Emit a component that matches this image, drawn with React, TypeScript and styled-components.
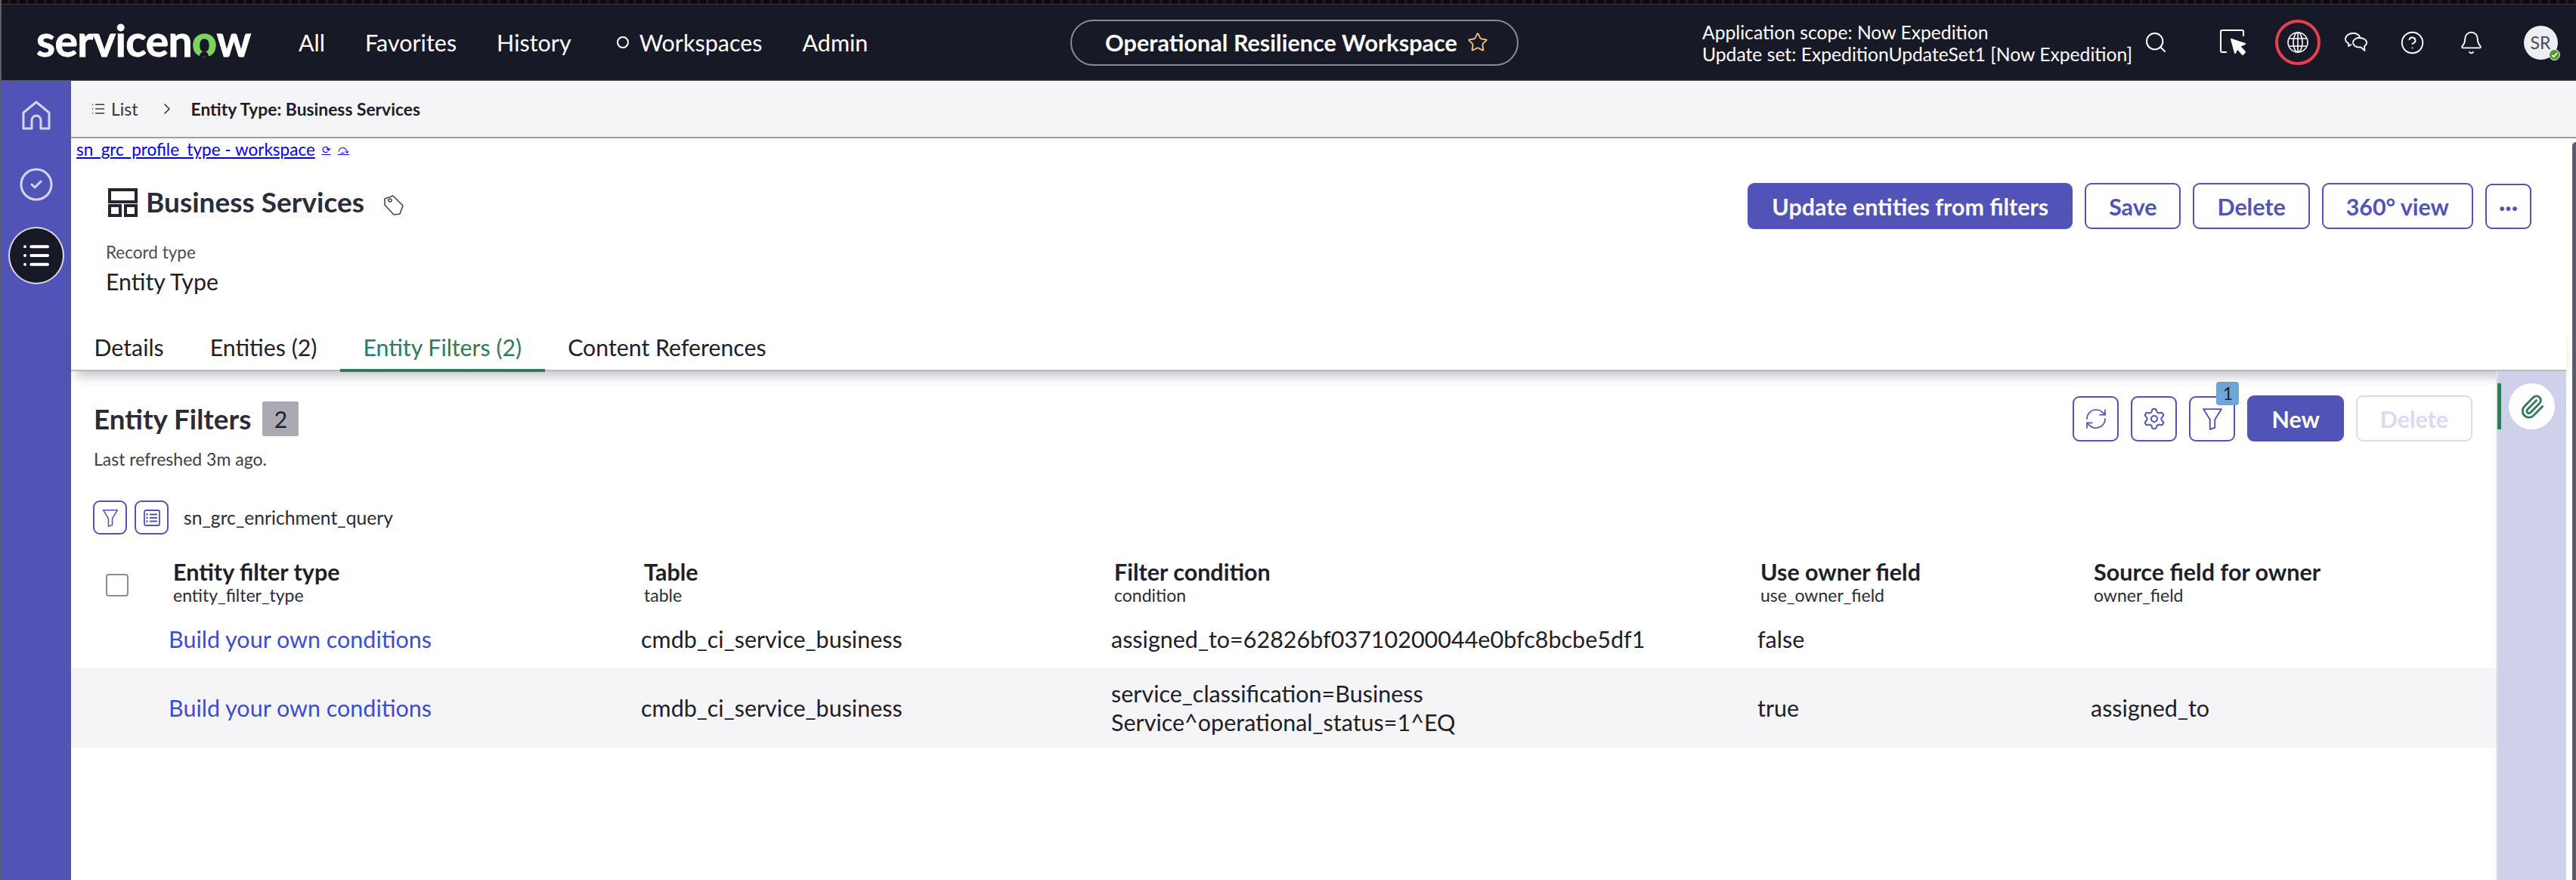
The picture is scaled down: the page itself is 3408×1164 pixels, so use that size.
import React from "react";
import styled, { createGlobalStyle } from "styled-components";
import { Bell, ChevronRight, CircleCheck, CircleHelp, List, Paperclip, RefreshCw, Search, Settings, Star } from "lucide-react";

const PRIMARY = "#5253b7";
const NAVY = "#181926";
const INK = "#1e2029";

const GlobalStyle = createGlobalStyle`
  html, body {
    margin: 0;
    padding: 0;
    background: #fff;
  }
  body {
    font-family: Lato, "Open Sans", sans-serif;
    color: ${INK};
  }
`;

const Page = styled.div`
  width: 3408px;
  height: 1164px;
  display: flex;
  flex-direction: column;
  overflow: hidden;
  box-sizing: border-box;
  border-left: 2px solid #5c5c6e;
`;

const TopStrip = styled.div`
  height: 5px;
  background: repeating-linear-gradient(90deg, #0b0b0d 0 8px, #1a1a1c 8px 12px);
  border-bottom: 1px solid #3a3a3e;
`;

const Header = styled.header`
  height: 100px;
  flex: none;
  display: flex;
  align-items: center;
  background: ${NAVY};
  border-bottom: 1px solid #55565f;
  padding-left: 46px;
  color: #fff;
`;

const Logo = styled.div`
  width: 282px;
  flex: none;
  font-size: 57px;
  font-weight: 700;
  letter-spacing: -0.6px;
  line-height: 60px;
  margin-top: -6px;
  white-space: nowrap;
  color: #fff;
  -webkit-text-stroke: 0.8px currentColor;
`;

const LogoO = styled.span`
  position: relative;
  color: #7ed35f;
  font-weight: 900;

  &::after {
    content: "";
    position: absolute;
    left: 50%;
    bottom: 12px;
    width: 12px;
    height: 7px;
    margin-left: -6px;
    background: ${NAVY};
    border-radius: 6px 6px 0 0;
  }
`;

const Nav = styled.nav`
  display: flex;
  align-items: center;
  gap: 53px;
  width: 1021px;
  flex: none;
  margin-left: 65px;
  font-size: 30.5px;
`;

const NavItem = styled.span<{ $ring?: boolean }>`
  display: flex;
  align-items: center;
  gap: 14px;
  margin-left: ${(p) => (p.$ring ? "7px" : "0")};
`;

const Ring = styled.i`
  width: 16px;
  height: 16px;
  box-sizing: border-box;
  border: 2px solid #fff;
  border-radius: 50%;
`;

const Pill = styled.div`
  width: 593px;
  height: 61px;
  flex: none;
  box-sizing: border-box;
  display: flex;
  align-items: center;
  justify-content: center;
  gap: 13px;
  padding-left: 6px;
  border: 2px solid #8a8b94;
  border-radius: 31px;
  font-size: 30.6px;
  font-weight: 700;
`;

const HeaderRight = styled.div`
  display: flex;
  align-items: center;
  margin-left: auto;
  padding-right: 17px;
`;

const Scope = styled.div`
  width: 572px;
  font-size: 24.7px;
  line-height: 29px;
  white-space: nowrap;
  margin-top: 2px;
`;

const HeaderIcon = styled.div<{ $ml: number; $alert?: boolean }>`
  width: 60px;
  height: 60px;
  box-sizing: border-box;
  flex: none;
  display: flex;
  align-items: center;
  justify-content: center;
  margin-left: ${(p) => p.$ml}px;
  border-radius: 50%;
  border: ${(p) => (p.$alert ? "4px solid #e5414d" : "none")};
`;

const Avatar = styled.div`
  position: relative;
  width: 45px;
  height: 45px;
  border-radius: 50%;
  background: #eceef2;
  color: #474b60;
  font-size: 23px;
  display: flex;
  align-items: center;
  justify-content: center;
`;

const AvatarBadge = styled.span`
  position: absolute;
  right: -3px;
  bottom: -1px;
  width: 15px;
  height: 15px;
  box-sizing: border-box;
  border-radius: 50%;
  border: 1.5px solid #fff;
  background: #4f9a2e;
  display: flex;
  align-items: center;
  justify-content: center;
`;

const Body = styled.div`
  flex: 1;
  min-height: 0;
  display: flex;
`;

const Sidebar = styled.aside`
  width: 92px;
  flex: none;
  display: flex;
  flex-direction: column;
  align-items: center;
  padding-top: 26px;
  background: ${PRIMARY};
  color: #d4d5e6;
`;

const SideCheck = styled.div`
  margin-top: 47px;
  display: flex;
`;

const SideActive = styled.div`
  width: 74px;
  height: 76px;
  box-sizing: border-box;
  margin-top: 32px;
  border-radius: 50%;
  border: 2px solid #d8d9e8;
  background: ${NAVY};
  color: #fff;
  display: flex;
  align-items: center;
  justify-content: center;
`;

const Main = styled.main`
  flex: 1;
  min-width: 0;
  display: flex;
  flex-direction: column;
`;

const Crumbs = styled.div`
  height: 74px;
  flex: none;
  display: flex;
  align-items: center;
  padding-left: 26px;
  background: #f5f5f7;
  border-bottom: 2px solid #9a9ca8;
  font-size: 23px;
  color: #343644;
`;

const CrumbLink = styled.span`
  display: flex;
  align-items: center;
  gap: 7px;
`;

const CrumbArrow = styled.span`
  display: flex;
  margin: 0 20px 0 26px;
`;

const CrumbCurrent = styled.span`
  font-weight: 700;
  font-size: 22.8px;
  color: ${INK};
`;

const Workspace = styled.div`
  flex: 1;
  min-height: 0;
  display: flex;
`;

const Panel = styled.div`
  flex: 1;
  min-width: 0;
  display: flex;
  flex-direction: column;
  padding-right: 8px;
`;

const Rim = styled.div`
  width: 5px;
  flex: none;
  margin-top: 5px;
  background: #5c5c6e;
  border-radius: 6px 0 0 0;
`;

const DevLink = styled.div`
  display: flex;
  gap: 9px;
  height: 30px;
  line-height: 30px;
  padding-left: 7px;
  font-size: 22.5px;
  color: #0000ee;
  text-decoration: underline;
`;

const DevGlyph = styled.span`
  font-size: 14px;
`;

const RecordHead = styled.div`
  display: flex;
  justify-content: space-between;
  align-items: flex-start;
  padding: 29px 46px 0 46px;
`;

const TitleRow = styled.div`
  display: flex;
  align-items: center;
  gap: 11px;
  height: 52px;
  padding-left: 3px;
`;

const RecordTitle = styled.h1`
  margin: -4px 0 0;
  font-size: 37px;
  font-weight: 700;
  color: #2a2c3a;
`;

const TagSlot = styled.span`
  display: flex;
  margin: 6px 0 0 14px;
`;

const FieldLabel = styled.div`
  margin-top: 25px;
  font-size: 22.5px;
  line-height: 30px;
  color: #4a4c58;
`;

const FieldValue = styled.div`
  margin-top: 5px;
  font-size: 30.3px;
  line-height: 36px;
`;

const ButtonRow = styled.div`
  display: flex;
  align-items: center;
  gap: 16px;
`;

const Button = styled.button<{ $variant?: "solid" | "outline" | "disabled"; $square?: boolean }>`
  height: ${(p) => (p.$square ? "60px" : "61px")};
  box-sizing: border-box;
  padding: ${(p) => (p.$square ? "0" : "0 30px")};
  width: ${(p) => (p.$square ? "61px" : "auto")};
  display: flex;
  align-items: center;
  justify-content: center;
  position: relative;
  font-family: inherit;
  font-size: 30.4px;
  font-weight: 700;
  border-radius: 9px;
  white-space: nowrap;
  background: ${(p) => (p.$variant === "solid" ? PRIMARY : "#fff")};
  color: ${(p) => (p.$variant === "solid" ? "#fff" : p.$variant === "disabled" ? "#d9dbf1" : PRIMARY)};
  border: 2px solid ${(p) => (p.$variant === "solid" ? PRIMARY : p.$variant === "disabled" ? "#d9dbf1" : PRIMARY)};
`;

const Tabs = styled.div`
  position: relative;
  z-index: 1;
  margin-top: 38px;
  height: 63px;
  box-sizing: border-box;
  flex: none;
  display: flex;
  border-bottom: 2px solid #b8bac6;
  box-shadow: 0 12px 14px -6px rgba(30, 32, 50, 0.28);
  background: #fff;
`;

const Tab = styled.div<{ $active?: boolean }>`
  height: 64px;
  box-sizing: border-box;
  padding: 0 30.5px;
  display: flex;
  align-items: center;
  font-size: 30.3px;
  color: ${(p) => (p.$active ? "#2f7a58" : INK)};
  border-bottom: ${(p) => (p.$active ? "4px solid #2f7a58" : "none")};
  padding-top: ${(p) => (p.$active ? "1px" : "0")};
  padding-bottom: ${(p) => (p.$active ? "0" : "3px")};
`;

const Lower = styled.div`
  flex: 1;
  min-height: 0;
  display: flex;
`;

const ListArea = styled.section`
  flex: 1;
  min-width: 0;
`;

const ListHead = styled.div`
  display: flex;
  justify-content: space-between;
  align-items: flex-start;
  padding: 32px 31px 0 30px;
`;

const ListTitleRow = styled.div`
  display: flex;
  align-items: center;
  gap: 15px;
  margin-top: 8px;
  height: 46px;
`;

const ListTitle = styled.h2`
  margin: 0;
  font-size: 36.8px;
  font-weight: 700;
  color: #2a2c3a;
`;

const CountBadge = styled.span`
  width: 48px;
  height: 46px;
  border-radius: 3px;
  background: #a9aab2;
  display: flex;
  align-items: center;
  justify-content: center;
  font-size: 30px;
  color: ${INK};
`;

const Refreshed = styled.div`
  margin-top: 15px;
  font-size: 23px;
  line-height: 30px;
  color: #3c3e4a;
`;

const FilterBadge = styled.span`
  position: absolute;
  top: -21px;
  right: -7px;
  width: 30px;
  height: 31px;
  border-radius: 4px;
  background: #6fa6d9;
  display: flex;
  align-items: center;
  justify-content: center;
  font-size: 23px;
  font-weight: 400;
  color: ${INK};
`;

const QueryRow = styled.div`
  display: flex;
  align-items: center;
  height: 45px;
  margin-top: 40px;
  padding-left: 29px;
  font-size: 24.7px;
  color: #2a2c3a;
`;

const QueryButton = styled.button`
  width: 45px;
  height: 45px;
  box-sizing: border-box;
  padding: 0;
  margin-right: 10px;
  display: flex;
  align-items: center;
  justify-content: center;
  border: 2px solid ${PRIMARY};
  border-radius: 9px;
  background: #fff;
`;

const QueryName = styled.span`
  margin-left: 10px;
`;

const columns = "131px 623px 622px 855px 441px 1fr";

const HeadRow = styled.div`
  display: grid;
  grid-template-columns: ${columns};
  height: 72px;
  margin-top: 28px;
  padding-top: 4px;
  box-sizing: border-box;
`;

const CheckCell = styled.div`
  padding: 20px 0 0 46px;
`;

const Checkbox = styled.span`
  display: block;
  width: 30px;
  height: 30px;
  box-sizing: border-box;
  border: 2px solid #8b8d99;
  border-radius: 4px;
  background: #fff;
`;

const HeadCell = styled.div`
  padding-left: 4px;
`;

const HeadLabel = styled.div`
  font-size: 30.5px;
  font-weight: 700;
  line-height: 34px;
  color: ${INK};
`;

const HeadField = styled.div`
  margin-top: 1px;
  font-size: 23px;
  line-height: 26px;
  color: #2a2c3a;
`;

const Row = styled.div<{ $shaded?: boolean; $height: number }>`
  display: grid;
  grid-template-columns: ${columns};
  align-items: center;
  height: ${(p) => p.$height}px;
  background: ${(p) => (p.$shaded ? "#f5f5f8" : "#fff")};
  font-size: 30.5px;
  line-height: 38px;
  color: ${INK};
`;

const CellLink = styled.a`
  margin-left: -2px;
  color: #3c4cd6;
`;

const Rail = styled.aside`
  position: relative;
  z-index: 2;
  width: 93px;
  flex: none;
  box-sizing: border-box;
  background: #cfd0ea;
  border-left: 2px solid #e4e4ea;
  padding: 16px 0 0 15px;
`;

const RailTab = styled.div`
  position: relative;
  width: 61px;
  height: 61px;
  border-radius: 50%;
  background: #fff;
  display: flex;
  align-items: center;
  justify-content: center;
  color: #2f7a58;

  &::before {
    content: "";
    position: absolute;
    left: -15px;
    top: 0;
    width: 5px;
    height: 61px;
    background: #2f7a58;
  }
`;

// drawings that the icon packages don't have in this shape
const HomeIcon = () => (
  <svg width="40" height="40" viewBox="0 0 40 40" fill="none" stroke="currentColor" strokeWidth="3" strokeLinejoin="round">
    <path d="M3 37V16L20 2l17 14v21H26V26a6 6 0 0 0-12 0v11H3z" />
  </svg>
);

const LayoutIcon = () => (
  <svg width="39" height="38" viewBox="0 0 39 38" fill="none" stroke="#23252f" strokeWidth="4">
    <rect x="2" y="2" width="35" height="16" />
    <rect x="2" y="23" width="14" height="13" />
    <rect x="23" y="23" width="14" height="13" />
  </svg>
);

const TagIcon = () => (
  <svg width="28" height="28" viewBox="0 0 28 28" fill="none" stroke="#444654" strokeWidth="1.6" strokeLinejoin="round">
    <path d="M2 6 13 2l13 13-4 11-8 1L2 14z" />
    <circle cx="9" cy="8" r="2" />
  </svg>
);

const CursorBoxIcon = () => (
  <svg width="36" height="34" viewBox="0 0 36 34" fill="none" stroke="#fff" strokeWidth="2" strokeLinejoin="round">
    <path d="M9 30H3a2 2 0 0 1-2-2V3a2 2 0 0 1 2-2h26a2 2 0 0 1 2 2v6" />
    <path d="M15 13l18 6-7 3 7 8-3 3-7-8-3 6z" fill="#fff" />
  </svg>
);

const GlobeIcon = () => (
  <svg width="30" height="30" viewBox="0 0 30 30" fill="none" stroke="#fff" strokeWidth="1.6">
    <circle cx="15" cy="15" r="13" />
    <ellipse cx="15" cy="15" rx="6" ry="13" />
    <path d="M15 2v26M3.500 10h23M3.500 20h23" />
  </svg>
);

const ChatIcon = () => (
  <svg width="30" height="26" viewBox="0 0 30 26" fill="none" stroke="#fff" strokeWidth="1.8" strokeLinejoin="round">
    <path d="M11 1C5.500 1 1 4.300 1 8.500c0 2.600 1.700 4.800 4.300 6.100L5 18l4-2.300" />
    <path d="M11 1c4.500 0 8 2.200 9.300 5.300" />
    <path d="M19 7c-4.500 0-8 2.800-8 6.300s3.500 6.200 8 6.200h2.500l5 4.500-.5-6c2-1 3-2.700 3-4.700C29 9.800 24.500 7 19 7z" />
  </svg>
);

const FunnelIcon = ({ size }: { size: number }) => (
  <svg width={size} height={size} viewBox="0 0 28 28" fill="none" stroke={PRIMARY} strokeWidth="1.8" strokeLinejoin="round">
    <path d="M3 2h22L17 15v10l-6 2V15z" />
  </svg>
);

const ListBoxIcon = () => (
  <svg width="24" height="24" viewBox="0 0 24 24" fill="none" stroke={PRIMARY} strokeWidth="1.8">
    <rect x="2" y="2" width="20" height="20" rx="2" />
    <path d="M9 7.500h10M9 12h10M9 16.500h10" />
    <path d="M4.500 7.500h2M4.500 12h2M4.500 16.500h2" strokeWidth="2.400" />
  </svg>
);

export default function App() {
  return (
    <Page>
      <GlobalStyle />
      <TopStrip />
      <Header>
        <Logo>
          servicen<LogoO>o</LogoO>w
        </Logo>
        <Nav>
          <NavItem>All</NavItem>
          <NavItem>Favorites</NavItem>
          <NavItem>History</NavItem>
          <NavItem $ring>
            <Ring />
            Workspaces
          </NavItem>
          <NavItem>Admin</NavItem>
        </Nav>
        <Pill>
          Operational Resilience Workspace
          <Star size={28} color="#f0c674" strokeWidth={1.6} />
        </Pill>
        <HeaderRight>
          <Scope>
            Application scope: Now Expedition
            <br />
            Update set: ExpeditionUpdateSet1 [Now Expedition]
          </Scope>
          <HeaderIcon $ml={-2}>
            <Search size={32} color="#fff" strokeWidth={1.5} />
          </HeaderIcon>
          <HeaderIcon $ml={43}>
            <CursorBoxIcon />
          </HeaderIcon>
          <HeaderIcon $ml={25} $alert>
            <GlobeIcon />
          </HeaderIcon>
          <HeaderIcon $ml={17}>
            <ChatIcon />
          </HeaderIcon>
          <HeaderIcon $ml={14}>
            <CircleHelp size={33} color="#fff" strokeWidth={1.4} />
          </HeaderIcon>
          <HeaderIcon $ml={18}>
            <Bell size={33} color="#fff" strokeWidth={1.4} />
          </HeaderIcon>
          <HeaderIcon $ml={32}>
            <Avatar>
              SR
              <AvatarBadge>
                <svg width="9" height="9" viewBox="0 0 10 10" fill="none" stroke="#fff" strokeWidth="2">
                  <path d="M1.500 5.500l2.500 2.500 5-6" />
                </svg>
              </AvatarBadge>
            </Avatar>
          </HeaderIcon>
        </HeaderRight>
      </Header>
      <Body>
        <Sidebar>
          <HomeIcon />
          <SideCheck>
            <CircleCheck size={48} strokeWidth={1.5} />
          </SideCheck>
          <SideActive>
            <List size={40} strokeWidth={2.4} />
          </SideActive>
        </Sidebar>
        <Main>
          <Crumbs>
            <CrumbLink>
              <List size={20} strokeWidth={1.8} />
              List
            </CrumbLink>
            <CrumbArrow>
              <ChevronRight size={24} strokeWidth={1.6} />
            </CrumbArrow>
            <CrumbCurrent>Entity Type: Business Services</CrumbCurrent>
          </Crumbs>
          <Workspace>
            <Panel>
              <DevLink>
                sn_grc_profile_type - workspace
                <DevGlyph>⟳</DevGlyph>
                <DevGlyph>⤼</DevGlyph>
              </DevLink>
              <RecordHead>
                <div>
                  <TitleRow>
                    <LayoutIcon />
                    <RecordTitle>Business Services</RecordTitle>
                    <TagSlot>
                      <TagIcon />
                    </TagSlot>
                  </TitleRow>
                  <FieldLabel>Record type</FieldLabel>
                  <FieldValue>Entity Type</FieldValue>
                </div>
                <ButtonRow>
                  <Button $variant="solid">Update entities from filters</Button>
                  <Button>Save</Button>
                  <Button>Delete</Button>
                  <Button>360° view</Button>
                  <Button $square>···</Button>
                </ButtonRow>
              </RecordHead>
              <Tabs>
                <Tab>Details</Tab>
                <Tab>Entities (2)</Tab>
                <Tab $active>Entity Filters (2)</Tab>
                <Tab>Content References</Tab>
              </Tabs>
              <Lower>
                <ListArea>
                  <ListHead>
                    <div>
                      <ListTitleRow>
                        <ListTitle>Entity Filters</ListTitle>
                        <CountBadge>2</CountBadge>
                      </ListTitleRow>
                      <Refreshed>Last refreshed 3m ago.</Refreshed>
                    </div>
                    <ButtonRow>
                      <Button $square>
                        <RefreshCw size={32} strokeWidth={1.3} />
                      </Button>
                      <Button $square>
                        <Settings size={32} strokeWidth={1.5} />
                      </Button>
                      <Button $square>
                        <FunnelIcon size={30} />
                        <FilterBadge>1</FilterBadge>
                      </Button>
                      <Button $variant="solid">New</Button>
                      <Button $variant="disabled">Delete</Button>
                    </ButtonRow>
                  </ListHead>
                  <QueryRow>
                    <QueryButton>
                      <FunnelIcon size={24} />
                    </QueryButton>
                    <QueryButton>
                      <ListBoxIcon />
                    </QueryButton>
                    <QueryName>sn_grc_enrichment_query</QueryName>
                  </QueryRow>
                  <HeadRow>
                    <CheckCell>
                      <Checkbox />
                    </CheckCell>
                    <HeadCell>
                      <HeadLabel>Entity filter type</HeadLabel>
                      <HeadField>entity_filter_type</HeadField>
                    </HeadCell>
                    <HeadCell>
                      <HeadLabel>Table</HeadLabel>
                      <HeadField>table</HeadField>
                    </HeadCell>
                    <HeadCell>
                      <HeadLabel>Filter condition</HeadLabel>
                      <HeadField>condition</HeadField>
                    </HeadCell>
                    <HeadCell>
                      <HeadLabel>Use owner field</HeadLabel>
                      <HeadField>use_owner_field</HeadField>
                    </HeadCell>
                    <HeadCell>
                      <HeadLabel>Source field for owner</HeadLabel>
                      <HeadField>owner_field</HeadField>
                    </HeadCell>
                  </HeadRow>
                  <Row $height={76}>
                    <span />
                    <CellLink>Build your own conditions</CellLink>
                    <span>cmdb_ci_service_business</span>
                    <span>assigned_to=62826bf03710200044e0bfc8bcbe5df1</span>
                    <span>false</span>
                    <span />
                  </Row>
                  <Row $height={106} $shaded>
                    <span />
                    <CellLink>Build your own conditions</CellLink>
                    <span>cmdb_ci_service_business</span>
                    <span>
                      service_classification=Business
                      <br />
                      Service^operational_status=1^EQ
                    </span>
                    <span>true</span>
                    <span>assigned_to</span>
                  </Row>
                </ListArea>
                <Rail>
                  <RailTab>
                    <Paperclip size={34} strokeWidth={2} />
                  </RailTab>
                </Rail>
              </Lower>
            </Panel>
            <Rim />
          </Workspace>
        </Main>
      </Body>
    </Page>
  );
}
